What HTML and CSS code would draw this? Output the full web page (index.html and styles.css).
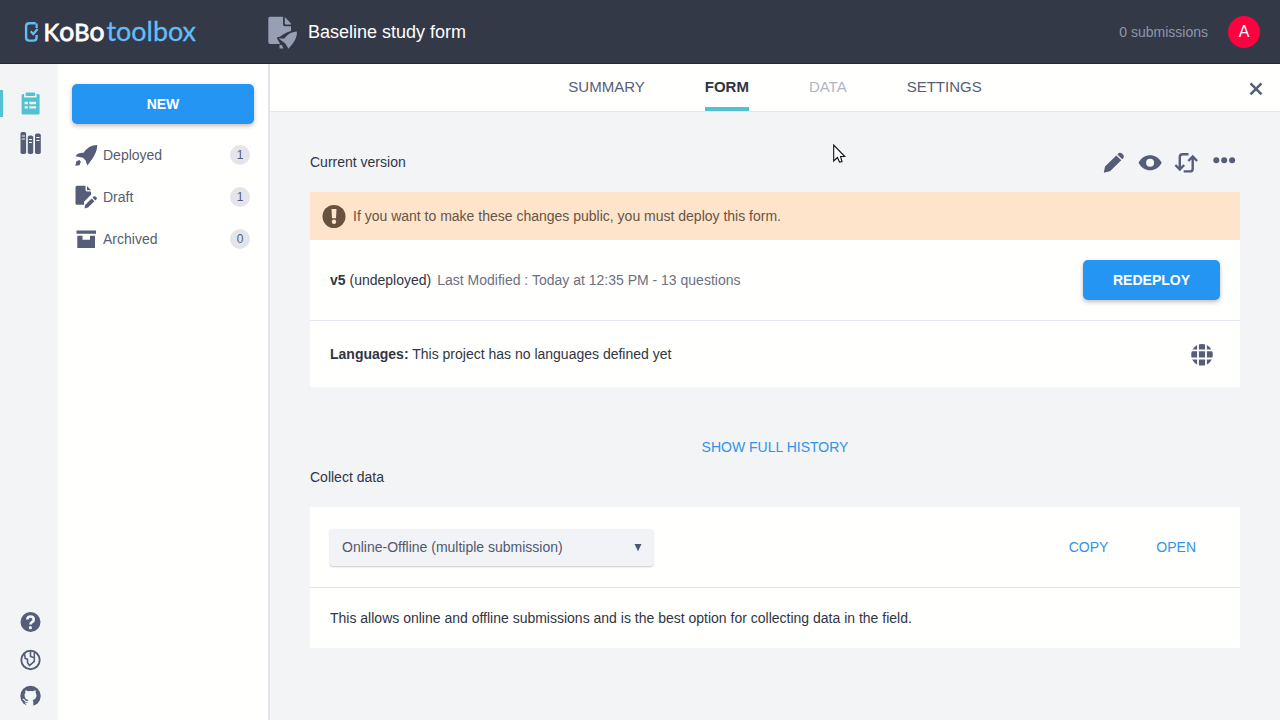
FILE: index.html
```html
<!DOCTYPE html>
<html lang="en">
<head>
<meta charset="utf-8">
<title>Baseline study form</title>
<link rel="stylesheet" href="styles.css">
</head>
<body>
<div class="app">
  <header class="topbar">
    <svg class="logo" width="176" height="44" viewBox="22 10 176 44">
      <path d="M35.7 23.2H29.3Q26.1 23.2 26.1 26.4V37.400Q26.100 40.600 29.300 40.600H33.400Q36.600 40.600 36.600 37.400V35" fill="none" stroke="#62bdfc" stroke-width="2.400"/>
      <path d="M36.600 23.400V28" stroke="#62bdfc" stroke-width="2.200"/>
      <path d="M30.700 31.300L33.300 34L37.600 29" fill="none" stroke="#62bdfc" stroke-width="2.200"/>
      <text class="logo-kobo" x="43.500" y="41" textLength="61" lengthAdjust="spacingAndGlyphs">K<tspan class="logo-round">o</tspan>B<tspan class="logo-round">o</tspan></text>
      <text class="logo-toolbox" x="106.500" y="41" textLength="89.500" lengthAdjust="spacingAndGlyphs">toolbox</text>
    </svg>
    <svg class="project-icon" width="32" height="34" viewBox="267 16 32 34">
      <g fill="#979fb4">
        <path d="M270 16.800H283V24.500Q283 26.200 284.700 26.200H291V31C285.500 32.500 282.500 35 280 36.800L276.800 37.500C277 39.500 279.400 41.300 280 44H270.200Q268.300 44 268.300 42V18.600Q268.300 16.800 270 16.800Z"/>
        <path d="M284.800 17L291 23.400V24.500H286Q284.800 24.500 284.800 23.300Z"/>
        <path d="M296.800 31.500C297.500 37 294.500 42 288.500 48.800L285.300 43.600L278.700 38.600L284.400 38.400C287.500 34.500 291.500 31.800 296.800 31.500Z"/>
        <path d="M279.500 44.700L282 45.200L283.300 48.600H279.500Z"/>
      </g>
    </svg>
    <h1 class="project-title">Baseline study form</h1>
    <span class="submissions">0 submissions</span>
    <span class="avatar">A</span>
  </header>
  <div class="body">
    <nav class="rail">
      <div class="rail-item active">
        <svg width="22" height="24" viewBox="20.400 92 22 24">
          <rect x="22" y="94" width="18" height="20.500" rx="1.500" fill="#53c1d0"/>
          <rect x="24.500" y="92" width="12.500" height="5.500" fill="#f2f4f6"/>
          <rect x="26" y="92.500" width="9.500" height="3.600" rx="1" fill="#53c1d0"/>
          <path d="M25 103H28.200M29.800 103H36.500M25 107.400H28.200M29.800 107.400H36.500" stroke="#f2f4f6" stroke-width="2.300"/>
        </svg>
      </div>
      <div class="rail-item">
        <svg width="22" height="24" viewBox="20 131 22 24">
          <g fill="#565d78"><rect x="20.500" y="132" width="5.600" height="22" rx="1.800"/><rect x="27.800" y="135.500" width="5.400" height="18.500" rx="1.800"/><rect x="35" y="133.500" width="5.800" height="20.500" rx="1.800"/></g>
          <path d="M21.800 136H25M21.800 139H25M29 139.500H32M29 142.500H32M36.300 137.500H39.500M36.300 140.500H39.500" stroke="#f2f4f6" stroke-width="1.200"/>
        </svg>
      </div>
      <div class="rail-bottom">
        <svg width="22" height="22" viewBox="0 0 22 22"><circle cx="10.500" cy="11" r="10" fill="#565d78"/><path d="M7.300 8.500Q7.500 5.500 10.500 5.500Q13.700 5.500 13.700 8.400Q13.700 10 12.200 10.900Q10.500 11.900 10.500 13.500" fill="none" stroke="#f2f4f6" stroke-width="2.700"/><circle cx="10.400" cy="16.700" r="1.600" fill="#f2f4f6"/></svg>
        <svg width="22" height="22" viewBox="0 0 22 22"><g fill="none" stroke="#565d78"><circle cx="10.500" cy="11" r="9.200" stroke-width="1.900"/><path d="M4.500 4.500L5.200 9.300L7.500 10.200V13.500L9.500 16.500L14.300 12.300V8.800L10.500 7.500V2.500" stroke-width="1.600"/><path d="M14.300 3.200V8.800" stroke-width="1.500"/></g></svg>
        <svg width="22" height="22" viewBox="0 0 22 22"><circle cx="10.500" cy="11" r="10.200" fill="#565d78"/><path d="M7.700 22V17.700Q4.200 18 3.500 15.500M13.300 22V17C13.300 16 13 15.500 12.500 15Q16.500 14.400 16.500 10.300Q16.500 8.800 15.600 7.700Q16 6.400 15.500 5.200Q14.300 5.200 12.900 6.200Q10.500 5.600 8.100 6.200Q6.700 5.200 5.500 5.200Q5 6.400 5.400 7.700Q4.500 8.800 4.500 10.300Q4.500 14.400 8.500 15Q7.700 15.600 7.700 17V22Z" fill="#f2f4f6"/><path d="M2.800 14.200Q4 14.200 4.700 15.500Q5.700 17 7.900 16.500" fill="none" stroke="#f2f4f6" stroke-width="1.300"/></svg>
      </div>
    </nav>
    <aside class="drawer">
      <button class="btn btn-new">NEW</button>
      <div class="folder">
        <svg width="24" height="24" viewBox="75 143.300 24 24"><path d="M97.200 145.200C97.300 152 93.500 158 87.300 165.700L85.500 160.500L83 158L75.500 156.500C77.500 153.500 80 152.800 83.500 153C87 148 91.200 145.200 97.200 145.200ZM79.500 160.200L80.900 162L79.500 165.500L75.300 166L76.400 161.500Z" fill="#565d78"/></svg>
        <span class="folder-name">Deployed</span><span class="count">1</span>
      </div>
      <div class="folder">
        <svg width="24" height="24" viewBox="75 185.200 24 24"><g fill="#565d78"><path d="M77 186H85.500V190Q85.500 191.800 87.300 191.800H91V195L84 202V205H77Q75.500 205 75.500 203.500V187.500Q75.500 186 77 186Z"/><path d="M87 186.300L91 190.500H87Z"/><path d="M84.500 208.700L85.300 205L91.600 198.600L94.400 201.400L88 207.700ZM92.500 197.800L93.900 196.500Q95.200 196.200 96.700 197.700Q97 198.800 96.600 199.500L95.300 200.600Z"/></g></svg>
        <span class="folder-name">Draft</span><span class="count">1</span>
      </div>
      <div class="folder">
        <svg width="24" height="24" viewBox="75 227.300 24 24"><path d="M76.500 230.800H96V234H76.500ZM77.300 236H82.500V240H90V236H95V248.200H77.300Z" fill="#565d78"/></svg>
        <span class="folder-name">Archived</span><span class="count">0</span>
      </div>
    </aside>
    <main class="main">
      <nav class="tabs">
        <a class="tab">SUMMARY</a><a class="tab current">FORM</a><a class="tab disabled">DATA</a><a class="tab">SETTINGS</a>
        <svg class="close" width="14" height="14" viewBox="0 0 14 14"><path d="M1.500 1.300L12.500 12.300M12.500 1.300L1.500 12.300" stroke="#565d78" stroke-width="2.500"/></svg>
      </nav>
      <div class="content">
        <div class="section-head">
          <h2 class="section-title">Current version</h2>
          <svg width="136" height="26" viewBox="1102 149 136 26">
            <g fill="#565d78">
              <path d="M1103.800 172.800L1105 166.500L1116.300 155.500L1121.300 160.200L1110 171.300ZM1117.400 154.400L1118.800 153.100Q1120.500 152.300 1122.200 153.700L1123.400 155Q1124.400 156.700 1123.400 158L1122.200 159.300Z"/>
              <path fill-rule="evenodd" d="M1138.500 162.800C1141.500 157.500 1145.500 155.300 1150.100 155.300S1158.700 157.500 1161.800 162.800C1158.700 168.100 1154.700 170.300 1150.100 170.300S1141.500 168.100 1138.500 162.800ZM1146.100 162.800A4 4 0 1 0 1154.100 162.800A4 4 0 1 0 1146.100 162.800Z"/>
              <circle cx="1216.300" cy="160.200" r="3"/><circle cx="1224.200" cy="160.200" r="3"/><circle cx="1232.100" cy="160.200" r="3"/>
            </g>
            <path d="M1188.500 154.300H1182.600Q1179.800 154.300 1179.800 157V168.500M1175.400 165L1179.800 169.500L1184.200 165M1183.700 171.400H1190Q1192.700 171.400 1192.700 168.700V157.500M1188.300 161L1192.700 156.500L1197.100 161" fill="none" stroke="#565d78" stroke-width="2.400"/>
          </svg>
        </div>
        <section class="card">
          <div class="alert">
            <svg width="24" height="24" viewBox="0 0 24 24"><circle cx="12" cy="12.500" r="11.500" fill="#66523f"/><path d="M9.500 5H14.500L14 14.300H10Z" fill="#ffe4cc"/><circle cx="12" cy="17.700" r="2.200" fill="#ffe4cc"/></svg>
            <span>If you want to make these changes public, you must deploy this form.</span>
          </div>
          <div class="row version">
            <span><b>v5</b> (undeployed)</span><span class="modified">Last Modified : Today at 12:35 PM - 13 questions</span>
            <button class="btn btn-deploy">REDEPLOY</button>
          </div>
          <div class="row languages">
            <span><b>Languages:</b> This project has no languages defined yet</span>
            <svg width="22" height="24" viewBox="0 0 22 24"><circle cx="11" cy="12.800" r="10.800" fill="#565d78"/><path d="M0 8.400H22M0 16.500H22M7 1V24M15 1V24" stroke="#fffffd" stroke-width="1.800"/></svg>
          </div>
        </section>
        <a class="history">SHOW FULL HISTORY</a>
        <h2 class="section-title collect-title">Collect data</h2>
        <section class="card">
          <div class="row collect">
            <div class="select"><span>Online-Offline (multiple submission)</span><svg width="8" height="10" viewBox="0 0 8 10"><path d="M.5 2H7.500L4 9.300Z" fill="#4f5873"/></svg></div>
            <a class="link copy">COPY</a><a class="link">OPEN</a>
          </div>
          <div class="row hint"><span>This allows online and offline submissions and is the best option for collecting data in the field.</span></div>
        </section>
      </div>
    </main>
  </div>
  <svg class="cursor" width="14" height="21" viewBox="0 0 14 21"><path d="M.7 1V17L4.500 13.500L6.500 18L9 17.500L7.500 12.500H11.800Z" fill="#fff" stroke="#111" stroke-width="1.100"/></svg>
</div>
</body>
</html>
```
FILE: styles.css
```css
* { box-sizing: border-box; }
body { margin: 0; font: 14px/20px "Liberation Sans", Arial, sans-serif; color: #313544; }
h1, h2 { margin: 0; font-weight: 400; }
.app { position: relative; width: 1280px; height: 720px; overflow: hidden; display: flex; flex-direction: column; background: #f2f4f6; }
.topbar { height: 64px; flex: none; display: flex; align-items: center; padding: 0 20px 0 22px; background: #343947; border-bottom: 1px solid #24293a; }
.logo { overflow: visible; }
.logo-kobo, .logo-toolbox { font-family: Lato, sans-serif; font-size: 24px; }
.logo-kobo { fill: #fff; stroke: #fff; stroke-width: .8; }
.logo-round { font-size: 27px; }
.logo-toolbox { fill: #62bdfc; stroke: #62bdfc; stroke-width: .3; font-size: 26.500px; }
.project-icon { margin: 3px 9px 0 69px; }
.project-title { font-size: 18px; color: #fff; }
.submissions { margin-left: auto; color: #8f96aa; }
.avatar { width: 32px; height: 32px; margin-left: 20px; border-radius: 50%; background: #ff0040; color: #fff; font-size: 16px; line-height: 32px; text-align: center; }
.body { flex: 1; min-height: 0; display: flex; }
.rail { width: 58px; display: flex; flex-direction: column; padding-top: 26px; }
.rail-item { height: 27px; margin-bottom: 12px; display: flex; align-items: center; padding-left: 20px; }
.rail-item.active { border-left: 3px solid #53c1d0; padding-left: 17px; }
.rail-bottom { margin-top: auto; display: flex; flex-direction: column; gap: 15px; padding: 0 0 13px 20px; }
.rail-bottom svg:nth-child(2) { margin-top: 1px; margin-bottom: -1px; }
.drawer { width: 212px; background: #fffffd; border-right: 2px solid #e4e5ec; padding: 20px 14px; }
.btn { display: block; border: 0; border-radius: 5px; background: #2595f3; color: #fff; height: 40px; font: bold 14px "Liberation Sans", Arial, sans-serif; box-shadow: 0 2px 4px rgba(90, 60, 60, .35); }
.btn-new { width: 182px; margin-bottom: 10px; }
.folder { height: 42px; display: flex; align-items: center; padding: 0 4px 0 3px; color: #565d70; }
.folder-name { margin-left: 4px; }
.count { margin-left: auto; width: 20px; height: 20px; border-radius: 50%; background: #e4e5eb; font-size: 12px; text-align: center; }
.main { flex: 1; display: flex; flex-direction: column; }
.tabs { height: 48px; flex: none; display: flex; justify-content: center; gap: 60px; background: #fffffd; border-bottom: 1px solid #e3e6ec; position: relative; }
.tab { height: 47px; font-size: 15px; line-height: 46px; color: #565d78; }
.tab.current { color: #2f3443; font-weight: 700; border-bottom: 4px solid #53c1d0; }
.tab.disabled { color: #b1b5c3; }
.close { position: absolute; right: 17px; top: 18px; }
.content { padding: 0 40px; display: flex; flex-direction: column; }
.section-head { height: 80px; padding-top: 20px; display: flex; align-items: center; justify-content: space-between; margin-right: 2px; }
.section-title { font-size: 14px; line-height: 20px; }
.card { background: #fffffd; }
.alert { height: 48px; display: flex; align-items: center; gap: 7px; padding-left: 12px; background: #ffe4cc; color: #665544; }
.row { display: flex; align-items: center; padding: 0 20px; }
.version { height: 81px; border-bottom: 1px solid #e5e5f0; }
.modified { margin-left: 6px; color: #6d7080; }
.btn-deploy { width: 137px; margin-left: auto; }
.languages { height: 66px; justify-content: space-between; padding-right: 27px; }
.history { align-self: center; margin-top: 50px; color: #3193e6; }
.collect-title { margin: 10px 0 20px; }
.collect { height: 81px; border-bottom: 1px solid #e4e5ec; padding-right: 44px; }
.select { width: 323px; height: 37px; display: flex; align-items: center; justify-content: space-between; padding: 0 11px 0 12px; border-radius: 3px; background: #f2f3f6; color: #50586f; box-shadow: 0 1px 2px rgba(90, 70, 90, .3); }
.link { color: #3193e6; }
.copy { margin: 0 48px 0 auto; }
.hint { height: 60px; }
.cursor { position: absolute; left: 833px; top: 144px; }
```
